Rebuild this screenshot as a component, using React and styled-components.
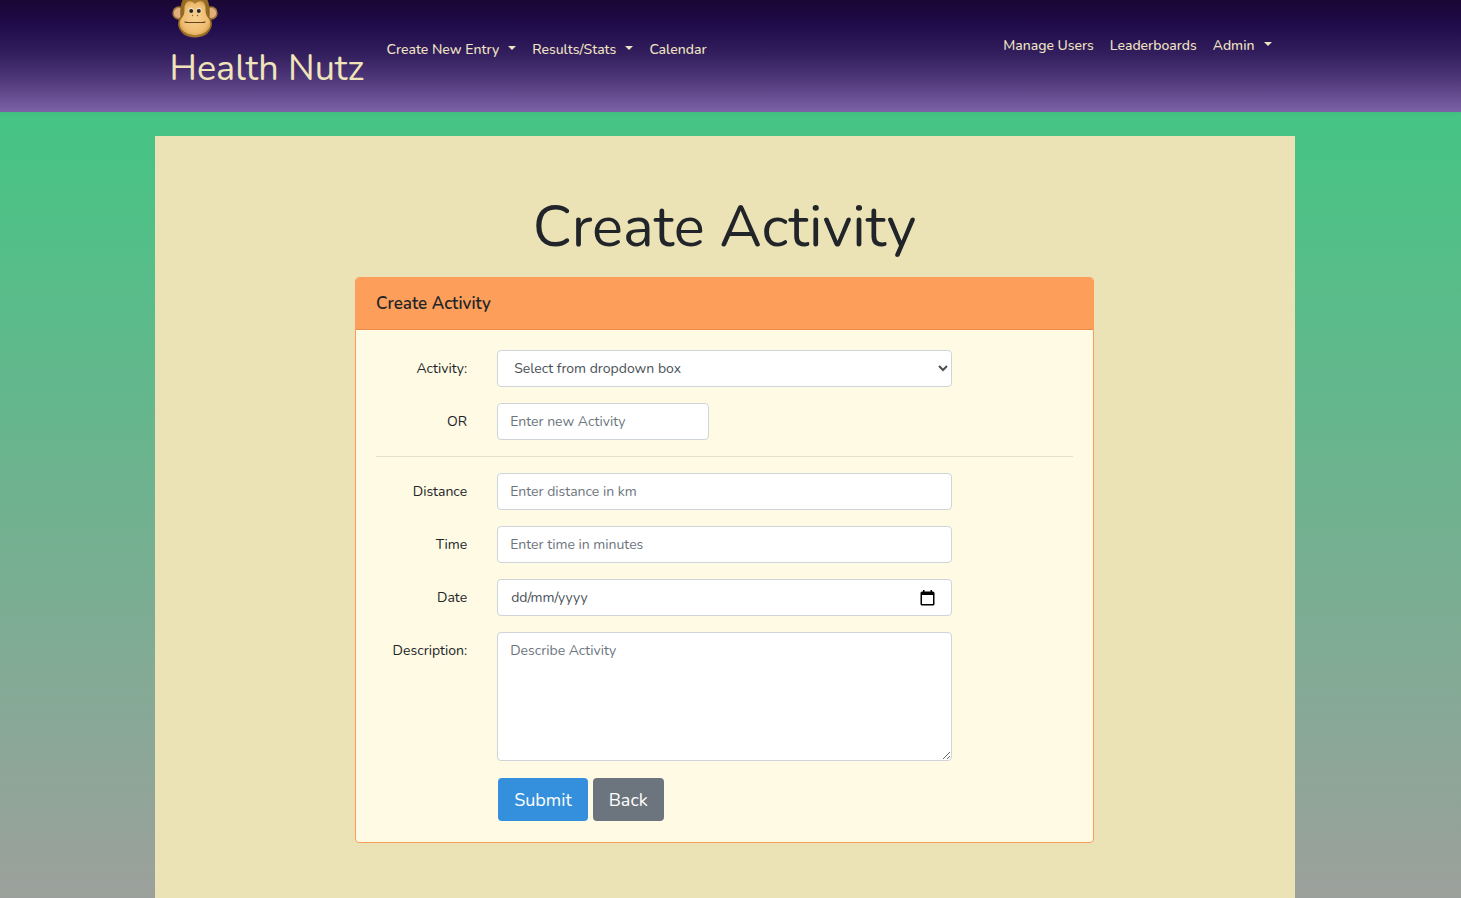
import React from "react";
import styled, { createGlobalStyle } from "styled-components";

const GlobalStyle = createGlobalStyle`
  *, *::before, *::after { box-sizing: border-box; }
  body {
    margin: 0;
    font-family: Nunito, Lato, sans-serif;
    font-size: 14px;
    line-height: 23px;
    color: #212529;
    background: #9c9f9b;
  }
`;

const Page = styled.div`
  min-height: 100vh;
  display: flex;
  flex-direction: column;
  background: linear-gradient(#38c880 0%, #45c484 13%, #9ca09c 100%);
`;

const Header = styled.header`
  height: 112px;
  padding-right: 12px;
  background: linear-gradient(#1a0633 0%, #200b4a 22%, #35205f 50%, #553d80 75%, #7b62a6 100%);
  box-shadow: 0 2px 4px rgba(0, 0, 0, 0.04);
`;

const HeaderInner = styled.div`
  max-width: 1140px;
  margin: 0 auto;
  padding: 0 15px;
  display: flex;
  align-items: flex-start;
`;

const Brand = styled.a`
  display: flex;
  flex-direction: column;
  width: 209px;
  color: #f0e4bb;
  font-size: 36px;
  line-height: 62px;
  white-space: nowrap;
  text-decoration: none;

  svg { display: block; margin-left: 2px; }
`;

const Nav = styled.nav`
  display: flex;
  padding-top: ${(p) => p.$top}px;
  margin-left: ${(p) => (p.$end ? "auto" : "0")};
  font-weight: 500;
`;

const NavLink = styled.a`
  padding: 0 8px;
  color: #efe3c3;
  text-decoration: none;
  white-space: nowrap;
`;

const NavToggle = styled.button`
  display: flex;
  align-items: center;
  gap: 9px;
  padding: 0 8px;
  border: 0;
  background: none;
  color: #efe3c3;
  font: inherit;
  white-space: nowrap;

  &::after {
    content: "";
    border-top: 4px solid;
    border-left: 4px solid transparent;
    border-right: 4px solid transparent;
    margin-bottom: 3px;
  }
`;

const Main = styled.main`
  flex: 1;
  display: flex;
  justify-content: center;
  padding: 24px 12px 0 0;
`;

const Panel = styled.div`
  width: 100%;
  max-width: 1140px;
  padding: 48px 15px;
  background: #ebe3b5;
`;

const Title = styled.h1`
  margin: 0 0 8px;
  font-size: 58px;
  font-weight: 400;
  line-height: 85px;
  text-align: center;
`;

const Card = styled.section`
  width: 67%;
  max-width: 739px;
  margin: 0 auto;
  border: 1px solid #fa9f5b;
  border-radius: 4px;
  background: #fffae3;
  overflow: hidden;
`;

const CardHeader = styled.h2`
  margin: 0;
  padding: 14px 20px;
  border-bottom: 1px solid #e88c48;
  background: #fd9f5b;
  font-size: 17px;
  font-weight: 600;
  line-height: 23px;
`;

const Form = styled.form`
  display: flex;
  flex-direction: column;
  gap: 16px;
  padding: 20px;
`;

const Row = styled.div`
  display: grid;
  grid-template-columns: 2fr 8fr 2fr;
  margin: 0 -15px;
`;

const Label = styled.label`
  padding: 7px 15px;
  text-align: right;
`;

const Cell = styled.div`
  grid-column: 2;
  width: ${(p) => (p.$half ? "50%" : "100%")};
  padding: 0 15px;
  display: flex;
`;

const control = `
  display: block;
  width: 100%;
  height: 37px;
  padding: 6px 12px;
  border: 1px solid #ced4da;
  border-radius: 4px;
  background: #fff;
  color: #495057;
  font: inherit;
  &::placeholder { color: #6c757d; opacity: 1; }
`;

const Input = styled.input`${control}`;
const Select = styled.select`${control}`;
const TextArea = styled.textarea`
  ${control}
  height: 129px;
  resize: vertical;
`;

const DateBox = styled.div`
  ${control}
  display: flex;
  align-items: center;
  padding: 0 16px 0 13px;
`;

const DateInput = styled.input`
  flex: 1;
  min-width: 0;
  padding: 0;
  border: 0;
  outline: 0;
  background: none;
  color: inherit;
  font: inherit;
  &::placeholder { color: #495057; opacity: 1; }
`;

const IconButton = styled.button`
  display: flex;
  padding: 0;
  border: 0;
  background: none;
  color: #000;
`;

const Divider = styled.hr`
  width: 100%;
  margin: 0;
  border: 0;
  border-top: 1px solid rgba(0, 0, 0, 0.1);
`;

const Actions = styled.div`
  grid-column: 2;
  display: flex;
  gap: 5px;
  padding: 1px 16px;
`;

const Button = styled.button`
  height: 43px;
  padding: 0 16px;
  border: 0;
  border-radius: 4px;
  background: ${(p) => (p.$primary ? "#3490dc" : "#6c757d")};
  color: #fff;
  font-family: inherit;
  font-size: 18px;
  font-weight: 400;
`;

const Monkey = () => (
  <svg width="46" height="38" viewBox="0 0 46 38" aria-hidden="true">
    <defs>
      <radialGradient id="face" cx="50%" cy="50%" r="60%">
        <stop offset="0" stopColor="#f8cf90" />
        <stop offset="0.7" stopColor="#efbd71" />
        <stop offset="1" stopColor="#cf9a48" />
      </radialGradient>
      <linearGradient id="fur" x1="0" y1="0" x2="1" y2="0">
        <stop offset="0" stopColor="#8a6220" />
        <stop offset="0.5" stopColor="#a87b2d" />
        <stop offset="1" stopColor="#8a6220" />
      </linearGradient>
    </defs>
    <ellipse cx="7" cy="13" rx="6.700" ry="6.700" fill="#a0783a" />
    <ellipse cx="39" cy="13" rx="6.700" ry="6.700" fill="#a0783a" />
    <ellipse cx="7" cy="13" rx="5.200" ry="5.100" fill="#e2ae7d" />
    <ellipse cx="39" cy="13" rx="5.200" ry="5.100" fill="#e2ae7d" />
    <path d="M11 -1H35C38 5 38 12 37.500 17C40 20 40.500 24 39.500 27C37 34 31 37.500 23 37.500S9 34 6.500 27C5.500 24 6 20 8.500 17C8 12 8 5 11 -1Z" fill="url(#fur)" />
    <path d="M12.500 8C12.500 1 19 -1 23 4C27 -1 33.500 1 33.500 8C33.500 12 33.500 14 35.500 17C39 20 39 25 37 28.500C34 33 28 35 23 35S12 33 9 28.500C7 25 7 20 10.500 17C12.500 14 12.500 12 12.500 8Z" fill="url(#face)" />
    <ellipse cx="19" cy="10.500" rx="2.700" ry="3" fill="#e9dfc6" />
    <ellipse cx="27" cy="10.500" rx="2.700" ry="3" fill="#e9dfc6" />
    <circle cx="19.200" cy="11" r="2" fill="#302619" />
    <circle cx="26.800" cy="11" r="2" fill="#302619" />
    <circle cx="20.500" cy="15.500" r="0.700" fill="#8b5d28" />
    <circle cx="25.500" cy="15.500" r="0.700" fill="#8b5d28" />
    <path d="M13 22Q14 22.500 16 22.500H30Q32 22.500 33 22" fill="none" stroke="#60431f" strokeWidth="1.200" strokeLinecap="round" />
  </svg>
);

const CalendarIcon = () => (
  <svg width="15" height="16" viewBox="0 0 15 16" aria-hidden="true">
    <path fill="currentColor" fillRule="evenodd" d="M3 0H4.500V1.500H10.500V0H12V1.500H13Q14.500 1.500 14.500 3V14Q14.500 15.500 13 15.500H2Q0.500 15.500 0.500 14V3Q0.500 1.500 2 1.500H3ZM2 5V14H13V5Z" />
  </svg>
);

export default function App() {
  return (
    <Page>
      <GlobalStyle />
      <Header>
        <HeaderInner>
          <Brand href="#">
            <Monkey />
            Health Nutz
          </Brand>
          <Nav $top={38} aria-label="Entries">
            <NavToggle type="button">Create New Entry</NavToggle>
            <NavToggle type="button">Results/Stats</NavToggle>
            <NavLink href="#">Calendar</NavLink>
          </Nav>
          <Nav $top={34} $end aria-label="Account">
            <NavLink href="#">Manage Users</NavLink>
            <NavLink href="#">Leaderboards</NavLink>
            <NavToggle type="button">Admin</NavToggle>
          </Nav>
        </HeaderInner>
      </Header>
      <Main>
        <Panel>
          <Title>Create Activity</Title>
          <Card>
            <CardHeader>Create Activity</CardHeader>
            <Form onSubmit={(e) => e.preventDefault()}>
              <Row>
                <Label htmlFor="activity">Activity:</Label>
                <Cell>
                  <Select id="activity">
                    <option>Select from dropdown box</option>
                  </Select>
                </Cell>
              </Row>
              <Row>
                <Label htmlFor="newActivity">OR</Label>
                <Cell $half>
                  <Input id="newActivity" placeholder="Enter new Activity" />
                </Cell>
              </Row>
              <Divider />
              <Row>
                <Label htmlFor="distance">Distance</Label>
                <Cell>
                  <Input id="distance" placeholder="Enter distance in km" />
                </Cell>
              </Row>
              <Row>
                <Label htmlFor="time">Time</Label>
                <Cell>
                  <Input id="time" placeholder="Enter time in minutes" />
                </Cell>
              </Row>
              <Row>
                <Label htmlFor="date">Date</Label>
                <Cell>
                  <DateBox>
                    <DateInput id="date" placeholder="dd/mm/yyyy" />
                    <IconButton type="button" aria-label="Choose a date">
                      <CalendarIcon />
                    </IconButton>
                  </DateBox>
                </Cell>
              </Row>
              <Row>
                <Label htmlFor="description">Description:</Label>
                <Cell>
                  <TextArea id="description" placeholder="Describe Activity" />
                </Cell>
              </Row>
              <Row>
                <Actions>
                  <Button type="submit" $primary>Submit</Button>
                  <Button type="button">Back</Button>
                </Actions>
              </Row>
            </Form>
          </Card>
        </Panel>
      </Main>
    </Page>
  );
}
